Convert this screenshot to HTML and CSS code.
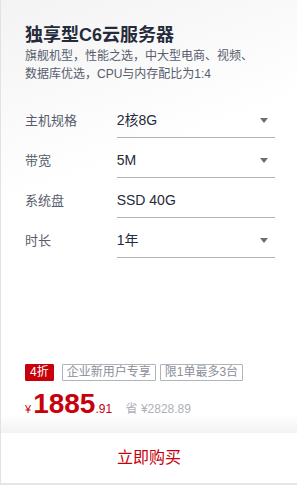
FILE: index.html
```html
<!DOCTYPE html>
<html lang="zh-CN">
<head>
    <meta charset="UTF-8">
    <meta name="viewport" content="width=device-width, initial-scale=1.0">
    <title>独享型C6云服务器</title>
    <link rel="stylesheet" href="styles.css">
</head>
<body>
    <div class="card">
        <div class="main">
            <h2 class="title">独享型C6云服务器</h2>
            <p class="desc">旗舰机型，性能之选，中大型电商、视频、数据库优选，CPU与内存配比为1:4</p>

            <div class="form">
                <div class="row">
                    <span class="label">主机规格</span>
                    <span class="value">2核8G<i class="arrow"></i></span>
                </div>
                <div class="row">
                    <span class="label">带宽</span>
                    <span class="value">5M<i class="arrow"></i></span>
                </div>
                <div class="row">
                    <span class="label">系统盘</span>
                    <span class="value">SSD 40G</span>
                </div>
                <div class="row">
                    <span class="label">时长</span>
                    <span class="value">1年<i class="arrow"></i></span>
                </div>
            </div>

            <div class="promo">
                <div class="tags">
                    <span class="tag discount">4折</span>
                    <span class="tag">企业新用户专享</span>
                    <span class="tag">限1单最多3台</span>
                </div>
                <div class="price">
                    <span class="yen">¥</span><span class="num">1885</span><span class="dec">.91</span>
                    <span class="save">省 ¥2828.89</span>
                </div>
            </div>
        </div>
        <div class="fade"></div>
        <div class="buy">立即购买</div>
    </div>
</body>
</html>
```

FILE: styles.css
```css
/* Página */
body {
    margin: 0;
    font-family: "Liberation Sans", "Noto Sans CJK SC", sans-serif;
    background-color: #fff;
}

/* Tarjeta del producto */
.card {
    width: 297px;
    height: 485px;
    box-sizing: border-box;
    display: flex;
    flex-direction: column;
    border-left: 1px solid #e2e2e2;
    border-bottom: 2px solid #e6e6e6;
    background: linear-gradient(160deg, #f3f3f3 0%, #fff 35%);
}

.main {
    flex: 1;
    display: flex;
    flex-direction: column;
    padding: 23px 22px 0 24px;
}

.title {
    margin: 0;
    font-size: 18px;
    line-height: 24px;
    font-weight: bold;
    color: #252b3a;
}

.desc {
    max-width: 236px;
    margin: 0;
    font-size: 12px;
    line-height: 18px;
    color: #575d6c;
}

/* Formulario */
.form {
    margin-top: 21px;
}

.row {
    display: flex;
    height: 34px;
    margin-bottom: 6px;
}

.label {
    width: 92px;
    font-size: 13px;
    line-height: 33px;
    color: #575d6c;
}

.value {
    width: 159px;
    display: flex;
    justify-content: space-between;
    align-items: center;
    font-size: 14px;
    line-height: 33px;
    color: #252b3a;
    border-bottom: 1px solid #b0b3b8;
}

.arrow {
    width: 0;
    height: 0;
    margin-right: 7px;
    border-left: 4px solid transparent;
    border-right: 4px solid transparent;
    border-top: 5px solid #6a6e77;
}

/* Promoción y precio */
.promo {
    margin-top: auto;
    margin-bottom: -7px;
}

.tags {
    display: flex;
    gap: 4px;
    margin-bottom: 10px;
}

.tag {
    height: 17px;
    box-sizing: border-box;
    padding: 0 4px;
    font-size: 12px;
    line-height: 15px;
    color: #8a8e99;
    border: 1px solid #b0b3b8;
    border-radius: 1px;
}

.tag.discount {
    margin-right: 4px;
    color: #fff;
    background-color: #c7000b;
    border-color: #c7000b;
}

.price {
    line-height: 26px;
    color: #c7000b;
    white-space: nowrap;
}

.yen {
    font-size: 11px;
    margin-right: 2px;
}

.num {
    font-size: 28px;
    font-weight: bold;
}

.dec {
    font-size: 12px;
}

.save {
    margin-left: 9px;
    font-size: 12px;
    color: #adb0b8;
}

/* Botón de compra */
.fade {
    height: 18px;
    background: linear-gradient(to bottom, rgba(240, 240, 240, 0), #f2f2f2);
}

.buy {
    height: 50px;
    line-height: 50px;
    text-align: center;
    font-size: 16px;
    color: #c7000b;
    background-color: #fff;
}
```
